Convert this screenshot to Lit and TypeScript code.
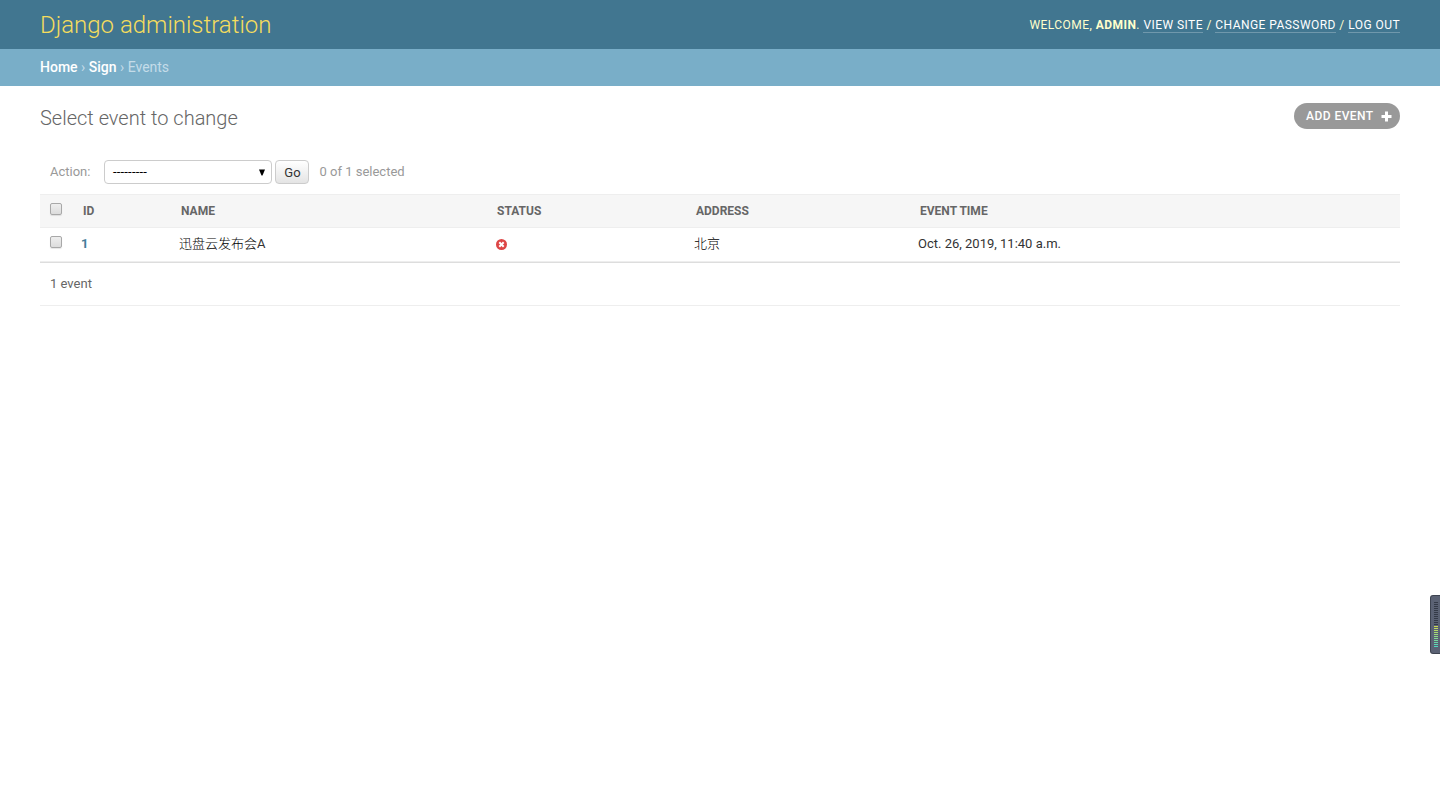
import { LitElement, html, css, svg } from "lit";
import { customElement } from "lit/decorators.js";

@customElement("level-meter")
class LevelMeter extends LitElement {
  static styles = css`
    :host { position: fixed; right: 0; top: 595px; display: block; width: 10px; height: 59px; }
    svg { display: block; }
  `;
  render() {
    const bars = Array.from({ length: 23 }, (_, i) => {
      const t = (i - 12) / 10;
      const fill = i < 12 ? "#343a47" : `rgb(${205 - t * 125}, ${220 - t * 5}, ${80 + t * 110})`;
      return svg`<rect x="4" y=${7 + i * 2} width="4" height="1" fill=${fill} />`;
    });
    return html`<svg width="10" height="59" viewBox="0 0 10 59">
      <path d="M10 0H3Q0 0 0 3V56Q0 59 3 59H10Z" fill="#3d4350" />
      <path d="M10 1H3Q1 1 1 3V56Q1 58 3 58H10Z" fill="#5b6274" />
      ${bars}
    </svg>`;
  }
}

@customElement("app-root")
class AppRoot extends LitElement {
  static styles = css`
    :host {
      display: block; min-height: 799px; background: #fff; color: #333;
      font: 13px/16px Roboto, "Noto Sans CJK SC", sans-serif;
    }
    * { box-sizing: border-box; }
    a { color: inherit; text-decoration: none; }
    .header {
      display: flex; align-items: center; justify-content: space-between;
      height: 49px; padding: 2px 40px 0; background: #417690; color: #ffc;
    }
    .brand { margin: 0; font-size: 24px; line-height: 29px; font-weight: 300; color: #f5dd5d; }
    .tools { font-size: 12px; line-height: 15px; letter-spacing: 0.45px; text-transform: uppercase; }
    .tools a { color: #fff; border-bottom: 1px solid rgba(255, 255, 255, 0.25); }
    .crumbs { height: 37px; padding: 10px 40px; background: #79aec8; color: #c4dce8; font-size: 14px; line-height: 17px; }
    .crumbs a { color: #fff; font-weight: 500; }
    .content { padding: 17px 40px; }
    .top { display: flex; justify-content: space-between; align-items: flex-start; height: 47px; }
    .title { margin: 3px 0 0; font-size: 20px; line-height: 24px; font-weight: 300; color: #666; }
    .add {
      display: flex; align-items: center; justify-content: space-between; width: 106px; height: 26px; padding: 0 8px 0 12px; border-radius: 13px;
      background: #999; color: #fff; font-size: 12px; font-weight: 500; letter-spacing: 0.45px; text-transform: uppercase;
    }
    .actions { display: flex; align-items: center; height: 44px; padding-left: 10px; color: #999; }
    .select {
      display: flex; align-items: center; justify-content: space-between; width: 168px; height: 24px; margin: 0 3px 0 14px; padding: 0 6px 0 7.5px;
      border: 1px solid #ccc; border-radius: 4px; background: #fff; color: #000;
    }
    .dashes { letter-spacing: 0.2px; }
    .go {
      width: 34px; height: 24px; margin-right: 10px; padding: 2px 0 0; border: 1px solid #ccc; border-radius: 4px;
      background: linear-gradient(#fff, #e4e4e4); color: #333; font: 13px/18px Roboto, sans-serif;
    }
    .table { width: 100%; table-layout: fixed; border-collapse: separate; border-spacing: 0; }
    .c0 { width: 33px; } .c1 { width: 98px; } .c2 { width: 316px; } .c3 { width: 199px; } .c4 { width: 224px; }
    th, td { text-align: left; vertical-align: top; border-bottom: 1px solid #eee; }
    thead th {
      height: 34px; padding: 9px 10px 0; background: #f6f6f6; border-top: 1px solid #eee;
      color: #666; font-size: 12px; line-height: 15px; font-weight: 700; text-transform: uppercase;
    }
    tbody td, tbody th { height: 34px; padding: 8px 8px 0; font-weight: 400; }
    tbody th { color: #447e9b; font-weight: 700; }
    .han { font-weight: 300; color: #000; }
    .table .pick { padding: 8px 0 0 10px; }
    .box {
      appearance: none; display: block; width: 12px; height: 12px; margin: 0; border: 1px solid #a8a8a8; border-radius: 2px;
      background: linear-gradient(#eee, #dcdcdc); box-shadow: 0 1px 1px rgba(0, 0, 0, 0.1);
    }
    .status { display: block; margin: 3px 0 0 1px; }
    .pages { height: 44px; padding: 13px 10px 0; border-top: 1px solid #ddd; border-bottom: 1px solid #eee; color: #666; }
  `;
  render() {
    return html`
      <header class="header">
        <h1 class="brand">Django administration</h1>
        <div class="tools">Welcome, <strong>admin</strong>. <a href="#">View site</a> / <a href="#">Change password</a> / <a href="#">Log out</a></div>
      </header>
      <nav class="crumbs"><a href="#">Home</a> › <a href="#">Sign</a> › Events</nav>
      <main class="content">
        <div class="top">
          <h2 class="title">Select event to change</h2>
          <a class="add" href="#">Add event
            <svg width="11" height="11" viewBox="0 0 11 11"><path d="M4 .5h3V4h3.500v3H7v3.500H4V7H.5V4H4z" fill="#fff" /></svg>
          </a>
        </div>
        <div class="actions">
          <span>Action:</span>
          <span class="select" role="combobox"><span class="dashes">---------</span>
            <svg width="6" height="7" viewBox="0 0 6 7"><path d="M0 .5h6L3.500 6.500h-1z" fill="#000" /></svg>
          </span>
          <button class="go">Go</button>
          <span>0 of 1 selected</span>
        </div>
        <table class="table">
          <colgroup><col class="c0" /><col class="c1" /><col class="c2" /><col class="c3" /><col class="c4" /><col /></colgroup>
          <thead>
            <tr>
              <th class="pick"><input class="box" type="checkbox" /></th>
              <th>ID</th><th>Name</th><th>Status</th><th>Address</th><th>Event time</th>
            </tr>
          </thead>
          <tbody>
            <tr>
              <td class="pick"><input class="box" type="checkbox" /></td>
              <th><a href="#">1</a></th>
              <td><span class="han">迅盘云发布会</span>A</td>
              <td><svg class="status" width="11" height="11" viewBox="0 0 11 11"><circle cx="5.500" cy="5.500" r="5.500" fill="#dd4646" /><path d="M3.300 3.300l4.400 4.400M7.700 3.300l-4.400 4.400" stroke="#fff" stroke-width="2" /></svg></td>
              <td><span class="han">北京</span></td>
              <td>Oct. 26, 2019, 11:40 a.m.</td>
            </tr>
          </tbody>
        </table>
        <div class="pages">1 event</div>
      </main>
      <level-meter></level-meter>
    `;
  }
}
